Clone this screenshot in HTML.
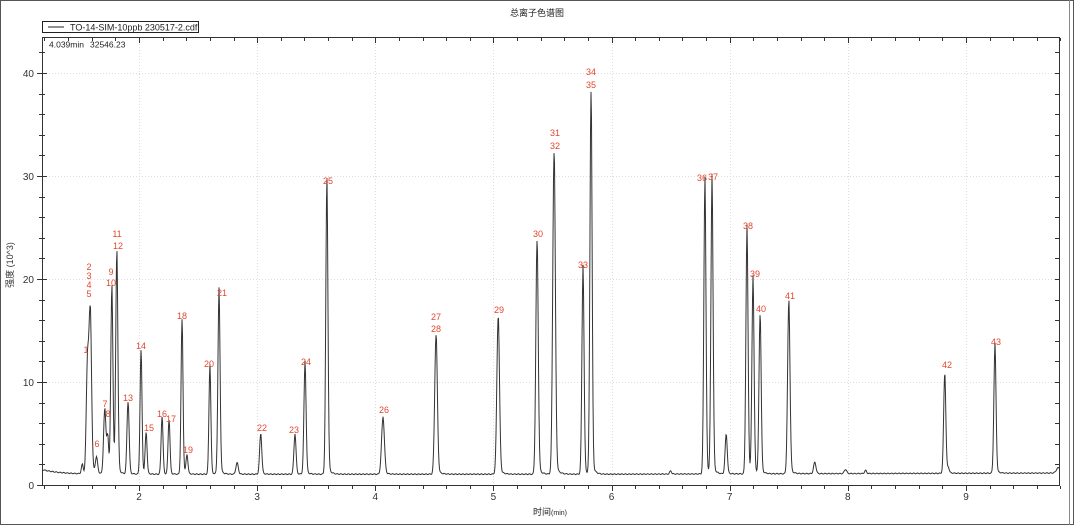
<!DOCTYPE html>
<html><head><meta charset="utf-8"><style>
html,body{margin:0;padding:0;background:#fff;}
svg{display:block;font-family:"Liberation Sans","Noto Sans CJK SC",sans-serif;}
.lb{fill:#e2472e;font-size:9px;text-anchor:middle;}
.ax{font-size:10px;fill:#333;}
</style></head><body>
<svg id="s" width="1074" height="525" viewBox="0 0 1074 525" xmlns="http://www.w3.org/2000/svg">
<rect x="0.5" y="0.5" width="1073" height="524" fill="#fff" stroke="#555"/>
<line x1="1069.5" y1="0" x2="1069.5" y2="525" stroke="#888"/>
<text x="537" y="16" font-size="9" text-anchor="middle" fill="#222">总离子色谱图</text>
<rect x="42.5" y="21.5" width="156" height="11" fill="#fff" stroke="#222"/>
<line x1="48" y1="27" x2="64" y2="27" stroke="#222"/>
<text x="70" y="30.5" font-size="9" fill="#222">TO-14-SIM-10ppb 230517-2.cdf</text>
<g id="grid" stroke="#ddd" stroke-dasharray="1,2"></g>
<g id="ticks" stroke="#333"></g>
<path id="tr" fill="none" stroke="#333" stroke-width="1"/>
<rect x="42.5" y="37.5" width="1017" height="448" fill="none" stroke="#333"/>
<text x="49" y="47.5" font-size="8.5" fill="#222">4.039min</text>
<text x="90" y="47.5" font-size="8.5" fill="#222">32546.23</text>
<g class="ax" text-anchor="end">
<text x="34" y="489">0</text><text x="34" y="386">10</text><text x="34" y="283">20</text><text x="34" y="180">30</text><text x="34" y="77">40</text>
</g>
<g class="ax" text-anchor="middle" id="xl"></g>
<text x="0" y="0" font-size="9" fill="#333" transform="translate(13,265) rotate(-90)" text-anchor="middle">强度 (10^3)</text>
<text x="550" y="515" font-size="9" fill="#222" text-anchor="middle">时间<tspan font-size="7">(min)</tspan></text>
<g>
<text class="lb" x="86" y="353">1</text>
<text class="lb" x="89" y="270">2</text><text class="lb" x="89" y="279">3</text><text class="lb" x="89" y="288">4</text><text class="lb" x="89" y="297">5</text>
<text class="lb" x="97" y="447">6</text>
<text class="lb" x="105" y="407">7</text><text class="lb" x="108" y="417">8</text>
<text class="lb" x="111" y="275">9</text><text class="lb" x="111" y="286">10</text>
<text class="lb" x="117" y="237">11</text><text class="lb" x="118" y="249">12</text>
<text class="lb" x="128" y="401">13</text><text class="lb" x="141" y="349">14</text>
<text class="lb" x="149" y="431">15</text><text class="lb" x="162" y="417">16</text><text class="lb" x="171" y="422">17</text>
<text class="lb" x="182" y="319">18</text><text class="lb" x="188" y="453">19</text>
<text class="lb" x="209" y="367">20</text><text class="lb" x="222" y="296">21</text>
<text class="lb" x="262" y="431">22</text><text class="lb" x="294" y="433">23</text><text class="lb" x="306" y="365">24</text>
<text class="lb" x="328" y="184">25</text><text class="lb" x="384" y="413">26</text>
<text class="lb" x="436" y="320">27</text><text class="lb" x="436" y="332">28</text>
<text class="lb" x="499" y="313">29</text><text class="lb" x="538" y="237">30</text>
<text class="lb" x="555" y="136">31</text><text class="lb" x="555" y="149">32</text>
<text class="lb" x="583" y="268">33</text>
<text class="lb" x="591" y="75">34</text><text class="lb" x="591" y="88">35</text>
<text class="lb" x="702" y="181">36</text><text class="lb" x="713" y="180">37</text>
<text class="lb" x="748" y="229">38</text><text class="lb" x="755" y="277">39</text><text class="lb" x="761" y="312">40</text>
<text class="lb" x="790" y="299">41</text><text class="lb" x="947" y="368">42</text><text class="lb" x="996" y="345">43</text>
</g>
</svg>
<script>
(function(){
var NS="http://www.w3.org/2000/svg";
function X(t){return 139+(t-2)*118.14;}
function Y(v){return 485-v*10.3;}
function el(p,tag,a,txt){var e=document.createElementNS(NS,tag);for(var k in a)e.setAttribute(k,a[k]);if(txt)e.textContent=txt;document.getElementById(p).appendChild(e);}
for(var m=2;m<=9;m++){var x=Math.round(X(m))+.5;el('grid','line',{x1:x,y1:38,x2:x,y2:485});el('xl','text',{x:X(m),y:500},String(m));}
for(var v=10;v<=40;v+=10){var y=Math.round(Y(v))+.5;el('grid','line',{x1:43,y1:y,x2:1059,y2:y});}
for(var t=1.2;t<9.81;t+=0.2){var x=Math.round(X(t))+.5;var maj=Math.abs(t-Math.round(t))<0.01;
el('ticks','line',{x1:x,y1:486,x2:x,y2:maj?491:489});el('ticks','line',{x1:x,y1:38,x2:x,y2:maj?43:41});}
for(var v=0;v<=42;v+=2){var y=Math.round(Y(v))+.5;var maj=v%10==0;
el('ticks','line',{x1:maj?37:39,y1:y,x2:maj?47:45,y2:y});el('ticks','line',{x1:1055,y1:y,x2:1060,y2:y});}
var P=[[1.52,0.9,.008],[1.563,10,.010],[1.587,15.5,.011],[1.64,1.5,.01],[1.71,6.2,.010],[1.735,3.5,.008],[1.77,17.8,.009],[1.812,21.2,.009],[1.907,7,.009],[2.017,12,.008],[2.06,4,.008],[2.195,5.6,.008],[2.254,5.3,.008],[2.364,15,.008],[2.406,1.8,.008],[2.6,10.4,.008],[2.677,17.4,.009],[2.83,1.1,.01],[3.03,3.9,.009],[3.32,3.8,.009],[3.405,10.6,.009],[3.59,28,.009],[4.065,5.4,.012],[4.514,13.5,.011],[5.04,15.2,.011],[5.369,22.6,.010],[5.513,31.2,.011],[5.758,19.6,.009],[5.826,37.1,.009],[6.5,0.3,.008],[6.79,28,.009],[6.85,28,.009],[6.97,3.8,.009],[7.146,23.3,.009],[7.197,18.5,.009],[7.257,15.4,.009],[7.50,16.5,.010],[7.72,1.1,.01],[7.98,.4,.01],[8.15,.3,.008],[8.82,9.6,.009],[8.85,.5,.008],[9.245,12.2,.009],[9.78,.5,.015]];
var d="";
for(var px=43;px<=1059;px+=0.5){var t=(px-139)/118.14+2;
var b=1.05+0.45*Math.exp(-(t-1.18)/0.15)+0.04*Math.sin(px*1.7)+0.12*(t>6?(t-6)/4:0);
for(var i=0;i<P.length;i++){var q=P[i];var z=(t-q[0])/q[2];if(Math.abs(z)<6)b+=q[1]*Math.exp(-z*z/2);var z2=(t-q[0])/(q[2]*2.5);if(z2>0&&z2<6)b+=q[1]*0.04*Math.exp(-z2);}
d+=(d?"L":"M")+px.toFixed(1)+" "+Y(b).toFixed(1);}
document.getElementById('tr').setAttribute('d',d);
})();
</script>
</body></html>
